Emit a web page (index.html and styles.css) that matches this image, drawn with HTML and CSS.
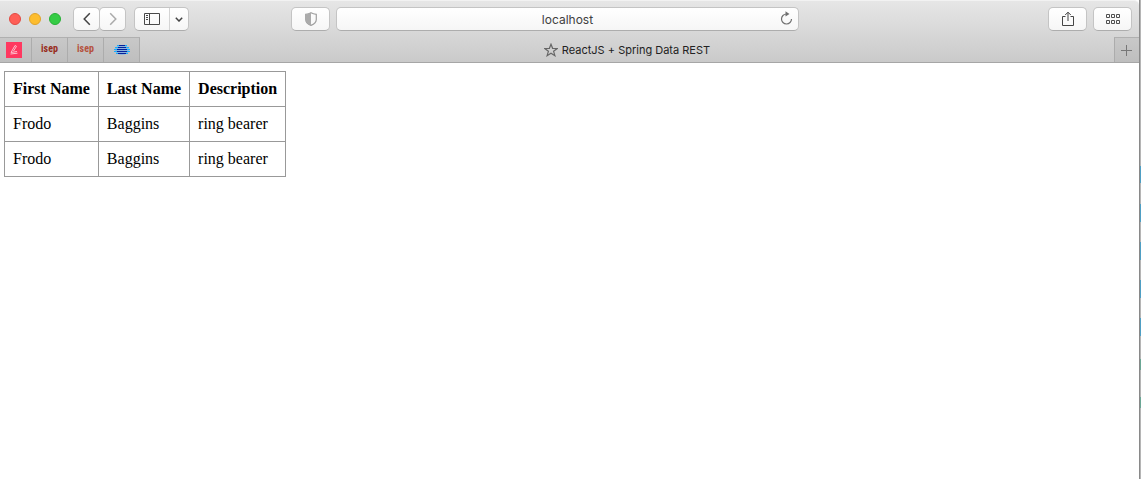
FILE: index.html
```html
<!DOCTYPE html>
<html lang="en">
<head>
<meta charset="utf-8">
<title>ReactJS + Spring Data REST</title>
<link rel="stylesheet" href="styles.css">
</head>
<body>
<div class="window">
  <header class="chrome">
    <div class="toolbar">
      <div class="toolbar-left">
        <div class="lights">
          <button class="light light-close" aria-label="Close"></button>
          <button class="light light-minimize" aria-label="Minimize"></button>
          <button class="light light-zoom" aria-label="Zoom"></button>
        </div>
        <div class="history">
          <button class="btn btn-nav" aria-label="Back"><svg width="8" height="14" viewBox="0 0 8 14" fill="none" stroke="#444" stroke-width="1.5"><path d="M6.8 1.2 1.2 7l5.6 5.8"/></svg></button>
          <button class="btn btn-nav btn-forward" aria-label="Forward"><svg width="8" height="14" viewBox="0 0 8 14" fill="none" stroke="#aaa" stroke-width="1.5"><path d="M1.2 1.2 6.8 7l-5.6 5.8"/></svg></button>
        </div>
        <div class="split">
          <button class="split-main" aria-label="Show sidebar"><svg width="16" height="12" viewBox="0 0 16 12" fill="none" stroke="#484848"><path d="M.5.5h15v11H.5zM5.5.5v11M2 2.5h2M2 4.5h2M2 6.5h2"/></svg></button>
          <button class="split-more" aria-label="Sidebar options"><svg width="8" height="5" viewBox="0 0 8 5" fill="none" stroke="#444" stroke-width="1.5"><path d="M.8.8 4 4 7.2.8"/></svg></button>
        </div>
      </div>
      <div class="toolbar-center">
        <button class="btn btn-wide" aria-label="Privacy report"><svg width="12" height="14" viewBox="0 0 12 14"><path d="M6 .7C4.5 1.6 2.8 2.1.7 2.3v5.2c0 2.7 2.2 4.6 5.3 5.9 3.1-1.3 5.3-3.2 5.3-5.9V2.3C9.2 2.1 7.5 1.6 6 .7z" fill="none" stroke="#a0a0a0" stroke-width="1.2"/><path d="M6 .7C4.5 1.6 2.8 2.1.7 2.3v5.2c0 2.7 2.2 4.6 5.3 5.9z" fill="#ababab"/></svg></button>
        <div class="address">
          <input class="address-input" type="text" value="localhost" aria-label="Address">
          <button class="reload" aria-label="Reload"><svg width="13" height="14" viewBox="0 0 13 14" fill="none" stroke="#707070" stroke-width="1.2"><path d="M6.500 3A5 5 0 1 0 11.500 8"/><path d="M5.500.3 9.500 2.900 5.500 5.500z" fill="#707070" stroke="none"/></svg></button>
        </div>
      </div>
      <div class="toolbar-right">
        <button class="btn btn-wide" aria-label="Share"><svg width="12" height="16" viewBox="0 0 12 16" fill="none" stroke="#444"><path d="M3.5 5.5h-3v9h11v-9h-3M6 10V1.2M3.2 4 6 1.2 8.8 4"/></svg></button>
        <button class="btn btn-wide" aria-label="Tab overview"><svg width="14" height="10" viewBox="0 0 14 10" fill="none" stroke="#505050"><path d="M.5.5h3v3h-3zM5.5.5h3v3h-3zM10.5.5h3v3h-3zM.5 6.5h3v3h-3zM5.5 6.5h3v3h-3zM10.5 6.5h3v3h-3z"/></svg></button>
      </div>
    </div>
    <nav class="tabs" aria-label="Tabs">
      <button class="pin pin-first" aria-label="Pinned notes"><svg width="16" height="16" viewBox="0 0 16 16"><path d="M0 0h16v16H0z" fill="#ff3860"/><path d="M9 3.5 5 10.500l6-1M4.500 12l7-.8M9 3.500l1.500.8L7.500 9" fill="none" stroke="#ffc0cd"/></svg></button>
      <button class="pin pin-isep">isep</button>
      <button class="pin pin-isep pin-light">isep</button>
      <button class="pin" aria-label="Pinned stripes"><svg width="16" height="10" viewBox="0 0 16 10"><ellipse cx="8" cy="5" rx="7" ry="5" fill="#8ab4dc"/><g fill="#16b0ff"><rect x="3" y="0" width="10" height="1"/><rect x="1" y="2" width="14" height="1"/><rect x="0" y="4" width="16" height="1"/><rect x="0" y="6" width="16" height="1"/><rect x="2" y="8" width="12" height="1"/></g><g fill="#06209c"><rect x="5" y="0" width="6" height="1"/><rect x="4" y="2" width="8" height="1"/><rect x="3" y="4" width="10" height="1"/><rect x="3" y="6" width="10" height="1"/><rect x="4" y="8" width="8" height="1"/></g></svg></button>
      <button class="tab"><svg width="14" height="14" viewBox="0 0 14 14" fill="none" stroke="#666" stroke-width="1.2"><path d="m7 1.2 1.600 4.100 4.600.2-3.600 2.800 1.300 4.400L7 10.200l-3.900 2.500 1.300-4.400L.8 5.500l4.600-.2z"/></svg><span>ReactJS + Spring Data REST</span></button>
      <button class="new-tab" aria-label="New tab"><svg width="11" height="11" viewBox="0 0 11 11" stroke="#777"><path d="M5.5 0v11M0 5.5h11"/></svg></button>
    </nav>
  </header>
  <main class="page">
    <table class="people">
      <thead><tr><th>First Name</th><th>Last Name</th><th>Description</th></tr></thead>
      <tbody>
        <tr><td>Frodo</td><td>Baggins</td><td>ring bearer</td></tr>
        <tr><td>Frodo</td><td>Baggins</td><td>ring bearer</td></tr>
      </tbody>
    </table>
  </main>
</div>
<div class="desktop"></div>
</body>
</html>
```
FILE: styles.css
```css
* { box-sizing: border-box; }
body {
  margin: 0;
  min-height: 100vh;
  display: grid;
  grid-template-columns: 1fr 2px;
  background: #fff;
  font-family: Inter, "Liberation Sans", sans-serif;
}
button {
  margin: 0;
  padding: 0;
  border: 0;
  background: none;
  font: inherit;
  color: inherit;
}
svg { display: block; flex: none; }
.chrome {
  background: linear-gradient(#e6e6e6, #cacaca);
  border-top: 1px solid #f2f2f2;
  border-bottom: 1px solid #a6a6a6;
  border-top-right-radius: 5px;
}
.toolbar {
  display: grid;
  grid-template-columns: 291fr 508fr 340fr;
  align-items: center;
  height: 36px;
}
.toolbar-left, .toolbar-center, .toolbar-right, .lights, .history, .split { display: flex; align-items: center; }
.toolbar-left { padding-left: 9px; }
.lights { gap: 8px; margin-right: 12px; }
.light { width: 12px; height: 12px; border-radius: 50%; border: 1px solid; }
.light-close { background: #ff5f57; border-color: #e24b43; }
.light-minimize { background: #fdbd2e; border-color: #e0a32a; }
.light-zoom { background: #35cc45; border-color: #27b036; }
.btn, .split, .address-input {
  height: 24px;
  border: 1px solid #c4c4c4;
  border-bottom-color: #adadad;
  border-radius: 5px;
  background: linear-gradient(#fff, #f6f6f6);
}
.btn { display: flex; align-items: center; justify-content: center; }
.btn-nav { width: 27px; }
.btn-forward { margin-left: -1px; }
.history { margin-right: 8px; }
.btn-wide { width: 39px; flex: none; }
.split-main, .split-more { display: flex; align-items: center; justify-content: center; height: 22px; }
.split-main { width: 35px; border-right: 1px solid #d4d4d4; }
.split-more { width: 18px; }
.toolbar-center { gap: 6px; }
.address { position: relative; flex: 1; display: flex; }
.address-input {
  width: 100%;
  padding: 0 24px;
  text-align: center;
  font: 12px Inter, "Liberation Sans", sans-serif;
  color: #404040;
}
.reload { position: absolute; right: 6px; top: 4px; }
.toolbar-right { justify-content: flex-end; gap: 6px; padding-right: 7px; }
.tabs { display: flex; height: 25px; }
.pin, .tab, .new-tab { display: flex; align-items: center; justify-content: center; }
.pin, .new-tab {
  background: linear-gradient(#c8c8c8, #bebebe);
  border-top: 1px solid #b0b0b0;
}
.pin { width: 36px; border-right: 1px solid #acacac; }
.pin-first { width: 32px; padding-right: 4px; }
.pin-isep {
  padding-bottom: 4px;
  font: bold 10px "Liberation Sans Narrow", "Roboto Condensed", Roboto, sans-serif;
  color: #982d1c;
}
.pin-light { color: #b5523e; }
.tab { flex: 1; gap: 4px; font-size: 11px; color: #222; }
.new-tab { width: 25px; padding-right: 2px; border-left: 1px solid #acacac; }
.page { padding: 8px 4px; }
.people {
  border-collapse: collapse;
  font: 16px/18px "Liberation Serif", serif;
  color: #000;
}
.people th, .people td {
  border: 1px solid #999;
  padding: 8px;
  text-align: left;
}
.desktop {
  border-left: 1px solid #898989;
  background: linear-gradient(#b5b5b5 166px, #4f9fc4 166px, #4f9fc4 183px, #b5b5b5 183px, #b5b5b5 204px, #4f9fc4 204px, #4f9fc4 222px, #b5b5b5 222px, #b5b5b5 242px, #4f9fc4 242px, #4f9fc4 260px, #b5b5b5 260px, #b5b5b5 280px, #4f9fc4 280px, #4f9fc4 298px, #b5b5b5 298px, #b5b5b5 318px, #4f9fc4 318px, #4f9fc4 336px, #b5b5b5 336px, #b5b5b5 359px, #6ba795 359px, #6ba795 370px, #b5b5b5 370px, #b5b5b5 397px, #6ba795 397px, #6ba795 408px, #b5b5b5 408px);
}
```
